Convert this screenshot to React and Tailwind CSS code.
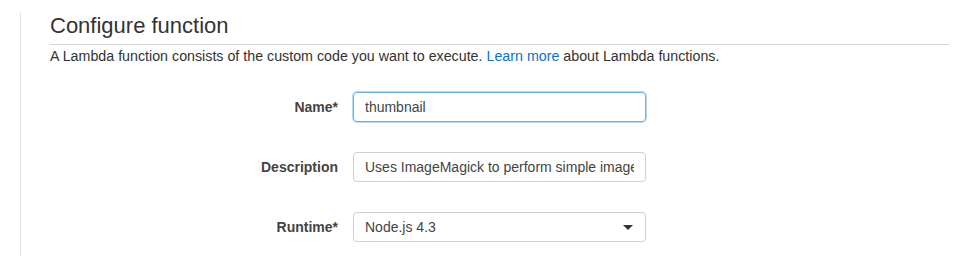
import { useState } from "react";

// Configure function form (Lambda console)
function App() {
  const [name, setName] = useState("thumbnail");
  const [description, setDescription] = useState(
    "Uses ImageMagick to perform simple image resize"
  );
  const [runtime, setRuntime] = useState("Node.js 4.3");

  return (
    <div className="h-[256px] w-[973px] overflow-hidden bg-white font-['Liberation_Sans',Arial,sans-serif]">
      <div className="ml-[20px] mt-[12px] h-[244px] w-[929px] border-l border-[#e1e1e1] pl-[29px]">
        {/* heading */}
        <div className="border-b border-[#d5d5d5] pb-[4px] text-[22px] leading-[28px] text-[#333]">
          Configure function
        </div>
        <div className="mt-[1px] text-[14.25px] leading-[20px] text-[#333]">
          A Lambda function consists of the custom code you want to execute.{" "}
          <a href="#" className="text-[#0d6fce]">
            Learn more
          </a>{" "}
          about Lambda functions.
        </div>

        {/* form */}
        <div className="mt-[26px] flex flex-col gap-[30px]">
          <div className="flex items-center gap-[15px]">
            <label className="w-[288px] text-right text-[14px] font-bold text-[#444]">
              Name*
            </label>
            <input
              value={name}
              onChange={(e) => setName(e.target.value)}
              className="h-[30px] w-[293px] rounded-[4px] border border-[#66afe9] px-[11px] text-[14px] text-[#444] shadow-[0_0_0_1px_rgba(102,175,233,0.45)] outline-none"
            />
          </div>
          <div className="flex items-center gap-[15px]">
            <label className="w-[288px] text-right text-[14px] font-bold text-[#444]">
              Description
            </label>
            <input
              value={description}
              onChange={(e) => setDescription(e.target.value)}
              className="h-[30px] w-[293px] rounded-[4px] border border-[#d0d0d0] px-[11px] text-[14px] text-[#444] outline-none"
            />
          </div>
          <div className="flex items-center gap-[15px]">
            <label className="w-[288px] text-right text-[14px] font-bold text-[#444]">
              Runtime*
            </label>
            <div className="relative h-[30px] w-[293px]">
              <select
                value={runtime}
                onChange={(e) => setRuntime(e.target.value)}
                className="h-full w-full appearance-none rounded-[4px] border border-[#d0d0d0] bg-white px-[11px] text-[14px] text-[#444] outline-none"
              >
                <option>Node.js 4.3</option>
                <option>Python 2.7</option>
                <option>Java 8</option>
              </select>
              <span className="pointer-events-none absolute right-[13px] top-[13px] h-0 w-0 border-x-[5px] border-t-[5px] border-x-transparent border-t-[#333]" />
            </div>
          </div>
        </div>
      </div>
    </div>
  );
}

export default App;
